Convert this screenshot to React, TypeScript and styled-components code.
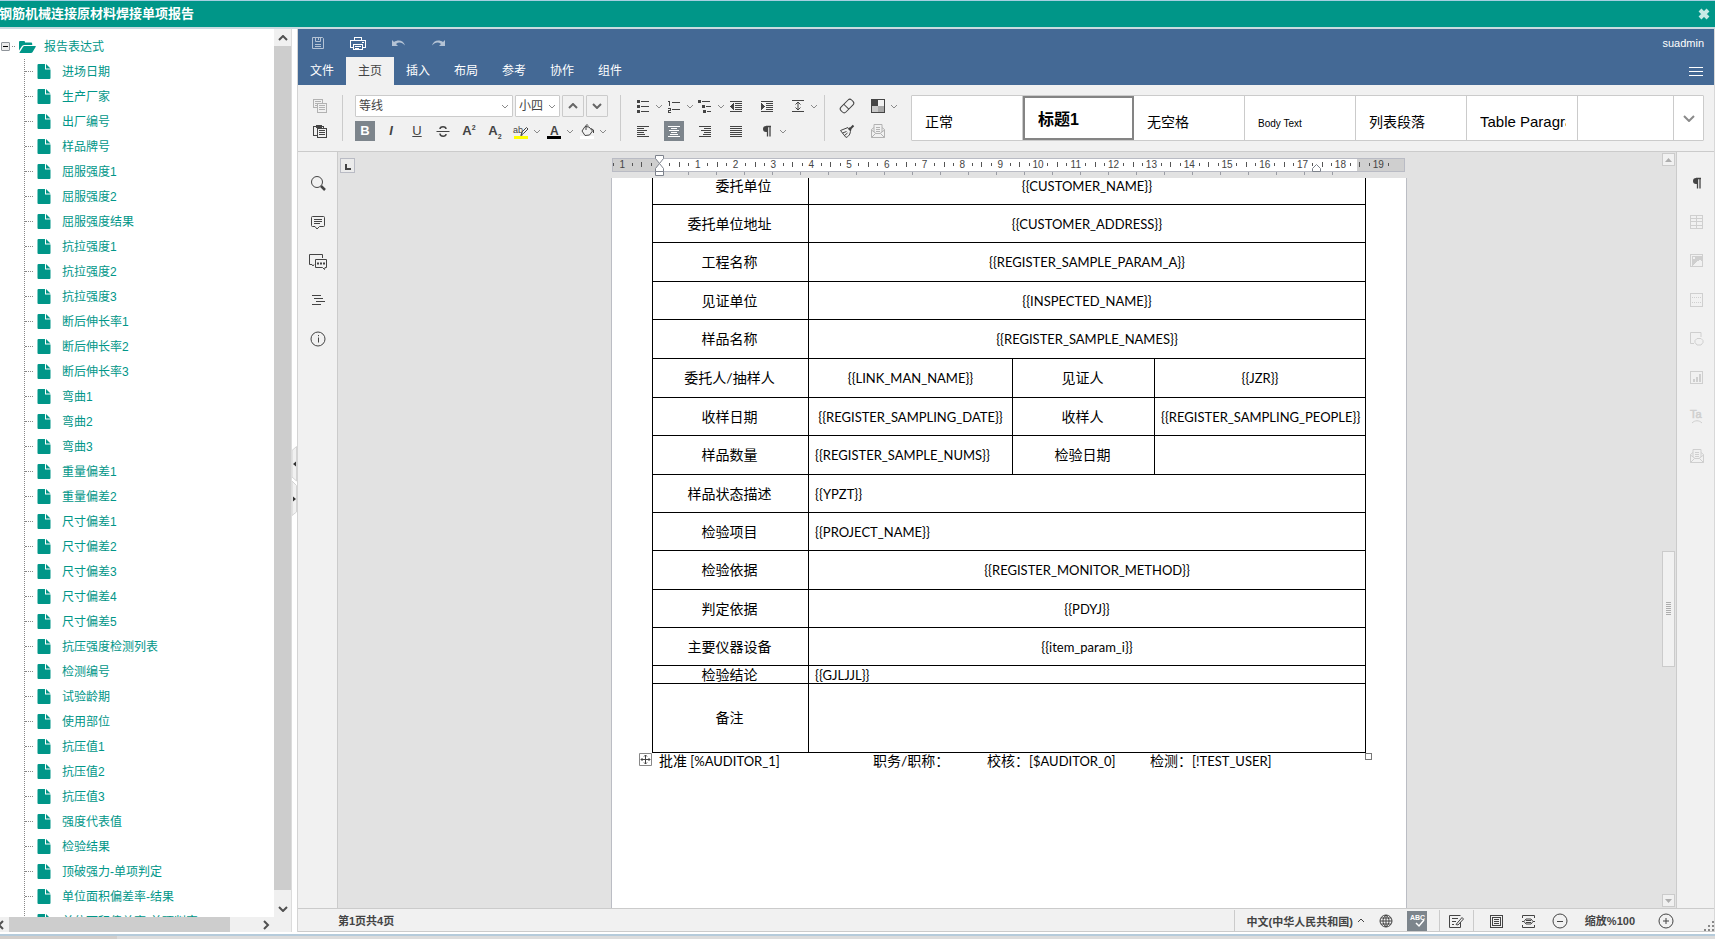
import React from "react";
import styled, { createGlobalStyle, css } from "styled-components";

const TEAL = "#009688";
const BLUE = "#446995";
const PANEL = "#f1f1f1";
const LINE = "#cbcbcb";
const INK = "#444444";
const MUTED = "#cfcfcf";

const Global = createGlobalStyle`
  *, *::before, *::after { box-sizing: border-box; }
  body {
    margin: 0;
    overflow: hidden;
    background: #fff;
    font-family: "Liberation Sans", "Noto Sans CJK SC", sans-serif;
    font-size: 12px;
    color: ${INK};
  }
  button, select { font-family: inherit; }
  button { padding: 0; border: 0; background: none; cursor: pointer; }
  svg { display: block; flex: none; }
`;

/* ---------- icons ---------- */

type IconProps = { children: React.ReactNode; size?: number; crisp?: boolean };

const Icon = ({ children, size = 20, crisp }: IconProps) => (
  <svg
    width={size}
    height={size}
    viewBox={`0 0 ${size} ${size}`}
    fill="none"
    stroke="currentColor"
    shapeRendering={crisp ? "crispEdges" : undefined}
    aria-hidden="true"
  >
    {children}
  </svg>
);

const icons: Record<string, React.ReactNode> = {
  save: (
    <Icon>
      <path d="M4.500 4.500h10l1 1v10h-11zM7.500 4.500v4h5v-4M10.500 5v2M7 11.500h6M7 13.500h6" />
    </Icon>
  ),
  print: (
    <Icon crisp>
      <path d="M6.500 7V4.500h7V7M5 14.500H2.500v-7h15v7H15M5.500 11.500h9v5h-9zM7 13.500h6M7 15.500h4M14 9.500h2" />
    </Icon>
  ),
  undo: (
    <Icon>
      <path d="M4 7v6h6l-2-2c3-2.500 6-1.500 9 1.500-1-5-7-6.500-11-3.500z" fill="currentColor" stroke="none" />
    </Icon>
  ),
  redo: (
    <Icon>
      <path d="M17 7v6h-6l2-2c-3-2.500-6-1.500-9 1.500 1-5 7-6.500 11-3.500z" fill="currentColor" stroke="none" />
    </Icon>
  ),
  copy: (
    <Icon crisp>
      <path d="M7 11.500H3.500v-8h9V7M5 5.500h6M5 7.500h2M5 9.500h2M7.500 7.500h9v9h-9zM9 9.500h6M9 11.500h6M9 13.500h6" />
    </Icon>
  ),
  paste: (
    <Icon crisp>
      <path d="M7 14.500H3.500v-9H6M12 5.500h1.500V7M7.500 7.500h9v9h-9zM9 9.500h6M9 11.500h6M9 13.500h6" />
      <path d="M6 4h6v3H6z" fill="currentColor" stroke="none" />
    </Icon>
  ),
  strike: (
    <Icon>
      <path d="M3.500 10.500h13" />
      <path d="M13 8c0-3-6-3-6 0M7 12.500c0 3.500 6.500 3.500 6 .5" strokeWidth="1.500" />
    </Icon>
  ),
  bullets: (
    <Icon crisp>
      <path d="M8 5.500h8M8 10.500h8M8 15.500h8" />
      <path d="M4 4h3v3H4zM4 9h3v3H4zM4 14h3v3H4z" fill="currentColor" stroke="none" />
    </Icon>
  ),
  numbers: (
    <Icon crisp>
      <path d="M8 6.500h8M8 13.500h8" />
      <path d="M4 5.500h1.500v4M4 12.500h2.500v2H4.500v2h2.500" />
    </Icon>
  ),
  multilevel: (
    <Icon crisp>
      <path d="M7 5.500h8M11 10.500h5M12 15.500h4" />
      <path d="M3 4h3v3H3zM7 9h3v3H7zM8 14h3v3H8z" fill="currentColor" stroke="none" />
    </Icon>
  ),
  outdent: (
    <Icon crisp>
      <path d="M4 5.500h12M9 7.500h7M9 9.500h7M9 11.500h7M9 13.500h7M4 15.500h12" />
      <path d="M8 7v7L4 10.500z" fill="currentColor" stroke="none" />
    </Icon>
  ),
  indent: (
    <Icon crisp>
      <path d="M4 5.500h12M9 7.500h7M9 9.500h7M9 11.500h7M9 13.500h7M4 15.500h12" />
      <path d="M4 7v7l4-3.500z" fill="currentColor" stroke="none" />
    </Icon>
  ),
  spacing: (
    <Icon>
      <path d="M4 4.500h12M4 15.500h12M10 6v8M7.500 8.500L10 6l2.500 2.500M7.500 11.500L10 14l2.500-2.500" />
    </Icon>
  ),
  left: (
    <Icon crisp>
      <path d="M4 5.500h12M4 7.500h7M4 9.500h10M4 11.500h7M4 13.500h8M4 15.500h12" />
    </Icon>
  ),
  center: (
    <Icon crisp>
      <path d="M4 5.500h12M7 7.500h6M5 9.500h10M7 11.500h6M6 13.500h8M4 15.500h12" />
    </Icon>
  ),
  right: (
    <Icon crisp>
      <path d="M4 5.500h12M9 7.500h7M6 9.500h10M9 11.500h7M8 13.500h8M4 15.500h12" />
    </Icon>
  ),
  justify: (
    <Icon crisp>
      <path d="M4 5.500h12M4 7.500h12M4 9.500h12M4 11.500h12M4 13.500h12M4 15.500h12" />
    </Icon>
  ),
  pilcrow: (
    <Icon>
      <path d="M14 5.500H9M10.500 5.500v10M13 5.500v10" strokeWidth="1.300" />
      <path d="M10.500 5H9a3 3 0 0 0 0 6h1.500z" fill="currentColor" stroke="none" />
    </Icon>
  ),
  eraser: (
    <Icon>
      <g transform="rotate(-45 10 10)">
        <rect x="2.500" y="6.500" width="15" height="7" rx="2.500" />
        <path d="M9 6.500v7" />
      </g>
    </Icon>
  ),
  brush: (
    <Icon>
      <path d="M13 8l3.500-3.500M11.500 7l2.500 2.500" strokeWidth="2" />
      <path d="M11 6.500l-7.500 3 5.500 7c2.500-1 4.500-3 4.500-7.500M5.500 12l4-1.500M7.500 14.500l3-2.500" />
    </Icon>
  ),
  shade: (
    <Icon crisp>
      <path d="M4 4h6v6H4z" fill="#444" stroke="none" />
      <path d="M10 10h6v6h-6z" fill="#a8a8a8" stroke="none" />
      <path d="M4 10h6v6H4z" fill="#c8c8c8" stroke="none" />
      <path d="M3.500 3.500h13v13h-13z" />
    </Icon>
  ),
  mail: (
    <Icon>
      <path d="M6 11V3.500h8V11M6 6.500l-2.500 2v8h13v-8l-2.500-2M3.500 9l4.500 3.500h4L16.500 9M3.500 16.500l4-4M16.500 16.500l-4-4M8 6.500h4M8 8.500h4M8 10.500h4" />
    </Icon>
  ),
  pen: (
    <Icon>
      <path d="M10 14l1.200-3.200L15.500 6.500l1.500 1.500-4.500 4.500zM9.500 14.500l2-.5" />
      <path d="M3 15h14v3H3z" fill="#ffff00" stroke="none" />
      <text x="2" y="12" fontSize="9" fill="currentColor" stroke="none">ab</text>
    </Icon>
  ),
  fontColor: (
    <Icon>
      <path d="M3 15h14v3H3z" fill="#000" stroke="none" />
      <text x="6" y="14" fontSize="12" fontWeight="700" fill="currentColor" stroke="none">A</text>
    </Icon>
  ),
  bucket: (
    <Icon>
      <path d="M3 15h14v3H3z" fill="#fff" stroke="none" />
      <path d="M8 5.500L5 10l3 4.500 4.500-.5 3-4-3.500-4-4-.5zM9 9V4.500c0-1 2-1 2 0M14 7.500l2.500 1.500v3" />
    </Icon>
  ),
  search: (
    <Icon>
      <circle cx="9" cy="9" r="5.500" />
      <path d="M13 13l4 4" strokeWidth="2.500" />
    </Icon>
  ),
  comment: (
    <Icon>
      <path d="M3.500 5.500a1 1 0 0 1 1-1h11a1 1 0 0 1 1 1v8a1 1 0 0 1-1 1h-4L9 17l-2-2.500H4.500a1 1 0 0 1-1-1zM6 7.500h8M6 9.500h8M6 11.500h6" />
    </Icon>
  ),
  chat: (
    <Icon>
      <path d="M6 13.500l-1 1.500-1-1.500H1.500v-10h13V7M7.500 8.500h11v8H17l-.500 2-2-2h-7z" />
      <path d="M9 11.500h2v2H9zM12 11.500h2v2h-2zM15 11.500h2v2h-2z" fill="currentColor" stroke="none" />
    </Icon>
  ),
  nav: (
    <Icon crisp>
      <path d="M4 5.500h9M6 8.500h9M8 11.500h9M4 14.500h9" />
    </Icon>
  ),
  info: (
    <Icon>
      <circle cx="10" cy="10" r="7" />
      <path d="M10.500 8.500v5M10.500 6v1.200" />
    </Icon>
  ),
  table: (
    <Icon crisp>
      <path d="M3.500 3.500h12v13h-12zM3 6.500h13M3 9.500h13M3 13.500h13M9.500 3v14" />
    </Icon>
  ),
  image: (
    <Icon crisp>
      <path d="M3.500 3.500h12v12h-12z" />
      <path d="M5 5h10v6l-2-3-2 2-6 5zM6 6v2h2V6z" fill="currentColor" fillRule="evenodd" stroke="none" />
    </Icon>
  ),
  header: (
    <Icon crisp>
      <path d="M3.500 3.500h12v13h-12z" />
      <path d="M5 7.500h10M5 12.500h10" strokeDasharray="1 1" />
    </Icon>
  ),
  shape: (
    <Icon>
      <path d="M7 14.500H3.500v-11h10.500V8M10 9.500h4l2 2v2l-2 2.500h-4l-2-2.500v-2z" />
    </Icon>
  ),
  chart: (
    <Icon crisp>
      <path d="M3.500 3.500h12v12h-12z" />
      <path d="M6 11h2v3H6zM9 9h2v5H9zM12 6h2v8h-2z" fill="currentColor" stroke="none" />
    </Icon>
  ),
  textArt: (
    <Icon>
      <text x="3" y="11" fontSize="11" fill="currentColor" stroke="currentColor" strokeWidth="0.500">Ta</text>
      <path d="M5 16c3-3 7-3 10 0" />
    </Icon>
  ),
  globe: (
    <Icon>
      <circle cx="10" cy="10" r="6" />
      <path d="M4 10h12M5 7h10M5 13h10M10 4v12M10 4c-4 3-4 9 0 12M10 4c4 3 4 9 0 12" />
    </Icon>
  ),
  spell: (
    <Icon>
      <text x="3" y="9" fontSize="7" fontWeight="700" fill="currentColor" stroke="none">ABC</text>
      <path d="M9 12l3 3 5-6" strokeWidth="1.500" />
    </Icon>
  ),
  edit: (
    <Icon>
      <path d="M14.500 11v5.500h-11v-12h11M6 7.500h6M6 10.500h4M6 13.500h2M10 13.500l6-7 1.500 1.500-5.500 6z" />
    </Icon>
  ),
  fitPage: (
    <Icon crisp>
      <path d="M4.500 4.500h12v12h-12zM6.500 6.500h8v8h-8zM8 8.500h5M8 10.500h5M8 12.500h5" />
    </Icon>
  ),
  fitWidth: (
    <Icon>
      <path d="M4.500 7V4.500h12V7M4.500 14v2.500h12V14M4 10.500h2M15 10.500h2M6 10.500l2-2.500h5l2 2.500-2 2.500H8zM8 9.500h5M8 11.500h5" />
    </Icon>
  ),
  minus: (
    <Icon>
      <circle cx="10" cy="10" r="7" />
      <path d="M7 10.500h6" />
    </Icon>
  ),
  plus: (
    <Icon>
      <circle cx="10" cy="10" r="7" />
      <path d="M7 10h6M10 7v6" />
    </Icon>
  ),
  menu: (
    <Icon crisp>
      <path d="M3 5.500h14M3 9.500h14M3 13.500h14" />
    </Icon>
  ),
};

const Chevron = ({ w = 6, up = false, stroke = 1 }: { w?: number; up?: boolean; stroke?: number }) => (
  <svg width={w + 2} height={w / 2 + 2} viewBox={`0 0 ${w + 2} ${w / 2 + 2}`} fill="none" stroke="currentColor" strokeWidth={stroke} aria-hidden="true">
    <path d={up ? `M1 ${w / 2 + 1}L${w / 2 + 1} 1l${w / 2} ${w / 2}` : `M1 1l${w / 2} ${w / 2} ${w / 2}-${w / 2}`} />
  </svg>
);

/* ---------- frame ---------- */

const Shell = styled.div`
  display: flex;
  flex-direction: column;
  height: 100vh;
`;

const TitleBar = styled.header`
  display: flex;
  align-items: center;
  justify-content: space-between;
  height: 29px;
  padding-right: 5px;
  background: ${TEAL};
  border-top: 1px solid #a6cfe0;
  border-bottom: 2px solid #c9dbe0;
`;

const Title = styled.h1`
  margin: 0 0 0 -1px;
  font-size: 13px;
  line-height: 20px;
  color: #fff;
`;

const CloseButton = styled.button`
  color: #c8e9e5;
`;

const Body = styled.div`
  display: flex;
  flex: 1;
  min-height: 0;
`;

const BottomStrip = styled.footer`
  height: 7px;
  background: linear-gradient(90deg, #d2cecb 117px, #dcdcdc 117px);
  border-top: 2px solid #fff;
  box-shadow: inset 0 2px 0 #b5cbdb;
`;

/* ---------- expression tree ---------- */

const Side = styled.aside`
  display: grid;
  grid-template-columns: 1fr 17px;
  grid-template-rows: 1fr 15px;
  width: 292px;
  border-right: 1px solid #dcdcdc;
`;

const Tree = styled.nav`
  overflow: hidden;
  min-height: 0;
  padding-top: 5px;
`;

const TreeRoot = styled.div`
  display: flex;
  align-items: center;
  height: 25px;
  color: ${TEAL};
`;

const Toggle = styled.button`
  display: grid;
  place-items: center;
  width: 9px;
  height: 9px;
  margin: 0 2px 0 1px;
  border: 1px solid #8f949a;
  border-radius: 1px;
  background: #ececec;
  &::before {
    content: "";
    width: 5px;
    height: 1px;
    background: #000;
  }
`;

const Dots = styled.span<{ $w: number }>`
  width: ${(p) => p.$w}px;
  border-top: 1px dotted #888;
`;

const TreeList = styled.ul`
  list-style: none;
  margin: 0 0 0 24px;
  padding: 0;
  border-left: 1px dotted #888;
`;

const TreeItem = styled.li`
  display: flex;
  align-items: center;
  height: 25px;
`;

const TreeLink = styled.a`
  display: flex;
  align-items: center;
  gap: 11px;
  margin-left: 4px;
  font-size: 12px;
  line-height: 16px;
  white-space: nowrap;
  color: ${TEAL};
  text-decoration: none;
`;

const RootLink = styled(TreeLink)`
  gap: 8px;
`;

const VBar = styled.div`
  display: flex;
  flex-direction: column;
  align-items: center;
  background: #f0f0f0;
  color: #505050;
`;

const VThumb = styled.div`
  width: 100%;
  flex: 1;
  margin-bottom: 10px;
  background: #cdcdcd;
`;

const BarButton = styled.button<{ $w: number; $h: number }>`
  display: grid;
  place-items: center;
  width: ${(p) => p.$w}px;
  height: ${(p) => p.$h}px;
  color: #505050;
`;

const HBar = styled.div`
  display: flex;
  align-items: center;
  background: #f0f0f0;
`;

const HThumb = styled.div`
  width: 221px;
  height: 15px;
  margin-right: auto;
  background: #cdcdcd;
`;

const Corner = styled.div`
  background: #f0f0f0;
`;

const Splitter = styled.div`
  display: flex;
  align-items: center;
  width: 6px;
  border-right: 1px solid #d4d4d4;
`;

const folder = (
  <svg width="17" height="14" viewBox="0 0 17 14" fill={TEAL} aria-hidden="true">
    <path d="M0 10.500V2.200C0 1.500.5 1 1.200 1h3.600c.7 0 1.200.5 1.200 1.200v.3h6c.7 0 1.200.5 1.200 1.200V5H5.500C4.500 5 3.700 5.300 3 6z" />
    <path d="M.5 12.500l3.300-5.200C4.200 6.500 5 6 6 6h10c.8 0 1 .5.6 1.100l-3 4.900c-.4.700-1.200 1-2 1H1c-.5 0-.8-.2-.5-.5z" />
  </svg>
);

const file = (
  <svg width="14" height="15" viewBox="0 0 14 15" fill={TEAL} aria-hidden="true">
    <path d="M1.500 0H8v5.500h5.500V14a1 1 0 0 1-1 1h-11a1 1 0 0 1-1-1V1a1 1 0 0 1 1-1z" />
    <path d="M9 0l4.500 4.500H9z" />
  </svg>
);

const expressions = [
  "进场日期", "生产厂家", "出厂编号", "样品牌号", "屈服强度1", "屈服强度2", "屈服强度结果",
  "抗拉强度1", "抗拉强度2", "抗拉强度3", "断后伸长率1", "断后伸长率2", "断后伸长率3",
  "弯曲1", "弯曲2", "弯曲3", "重量偏差1", "重量偏差2", "尺寸偏差1", "尺寸偏差2", "尺寸偏差3",
  "尺寸偏差4", "尺寸偏差5", "抗压强度检测列表", "检测编号", "试验龄期", "使用部位", "抗压值1",
  "抗压值2", "抗压值3", "强度代表值", "检验结果", "顶破强力-单项判定", "单位面积偏差率-结果",
  "单位面积偏差率-单项判定",
];

const Sidebar = () => (
  <Side>
    <Tree aria-label="报告表达式">
      <TreeRoot>
        <Toggle aria-label="折叠" />
        <Dots $w={3} />
        <RootLink href="#root">{folder}报告表达式</RootLink>
      </TreeRoot>
      <TreeList>
        {expressions.map((name) => (
          <TreeItem key={name}>
            <Dots $w={8} />
            <TreeLink href="#item">{file}{name}</TreeLink>
          </TreeItem>
        ))}
      </TreeList>
    </Tree>
    <VBar>
      <BarButton $w={17} $h={17} aria-label="向上"><Chevron w={8} up stroke={2} /></BarButton>
      <VThumb />
      <BarButton $w={17} $h={17} aria-label="向下"><Chevron w={8} stroke={2} /></BarButton>
    </VBar>
    <HBar>
      <BarButton $w={9} $h={15} aria-label="向左">
        <svg width="9" height="10" viewBox="0 0 9 10" fill="none" stroke="currentColor" strokeWidth="2"><path d="M3 1L-1 5l4 4" /></svg>
      </BarButton>
      <HThumb />
      <BarButton $w={17} $h={15} aria-label="向右">
        <svg width="8" height="10" viewBox="0 0 8 10" fill="none" stroke="currentColor" strokeWidth="2"><path d="M2 1l4 4-4 4" /></svg>
      </BarButton>
    </HBar>
    <Corner />
  </Side>
);

const SplitHandle = () => (
  <Splitter>
    <svg width="5" height="70" viewBox="0 0 5 70" aria-hidden="true">
      <path d="M0 4.500L4.500.5v34.500l-4.500-4z" fill="#f1f1f1" stroke="#d4d4d4" />
      <path d="M0 35l4.500 4.500V66L0 69.500z" fill="#f1f1f1" stroke="#d4d4d4" />
      <path d="M4 15.500v5l-3-2.500zM1 50.500v5l3-2.500z" fill="#333" />
    </svg>
  </Splitter>
);

/* ---------- editor header ---------- */

const Editor = styled.main`
  display: flex;
  flex: 1;
  flex-direction: column;
  min-width: 0;
  border-right: 1px solid #d8d8d8;
`;

const EditorHead = styled.div`
  display: flex;
  justify-content: space-between;
  height: 56px;
  padding-right: 10px;
  background: ${BLUE};
  color: #fff;
`;

const HeadLeft = styled.div`
  display: flex;
  flex-direction: column;
`;

const QuickRow = styled.div`
  display: flex;
  align-items: center;
  gap: 20px;
  height: 28px;
  padding-left: 10px;
`;

const IconButton = styled.button<{ $active?: boolean; $muted?: boolean; $faint?: boolean; $onBlue?: boolean }>`
  display: grid;
  place-items: center;
  width: 20px;
  height: 20px;
  font-size: 12px;
  color: ${(p) => (p.$onBlue ? (p.$muted ? "#b4c3d5" : "#fff") : p.$faint ? MUTED : p.$muted ? "#b2b2b2" : INK)};
  ${(p) => p.$active && css`
    background: #7d858c;
    color: #fff;
  `}
`;

const Tabs = styled.div`
  display: flex;
`;

const Tab = styled.button<{ $active?: boolean }>`
  width: 48px;
  height: 28px;
  padding-bottom: 3px;
  font-size: 12px;
  color: ${(p) => (p.$active ? INK : "#fff")};
  background: ${(p) => (p.$active ? PANEL : "transparent")};
`;

const UserBox = styled.div`
  display: flex;
  flex-direction: column;
  align-items: flex-end;
  gap: 5px;
  font-size: 11px;
  line-height: 28px;
`;

const MenuButton = styled(IconButton)`
  margin-right: -2px;
`;

const tabs = ["文件", "主页", "插入", "布局", "参考", "协作", "组件"];

/* ---------- toolbar ---------- */

const Toolbar = styled.div`
  display: flex;
  gap: 12px;
  height: 67px;
  padding: 10px 10px 9px 12px;
  background: ${PANEL};
  border-bottom: 1px solid ${LINE};
`;

const Divider = styled.span`
  width: 1px;
  height: 46px;
  background: ${LINE};
`;

const Group = styled.div`
  display: flex;
  flex-direction: column;
  gap: 4px;
`;

const Row = styled.div<{ $gap?: number; $tall?: boolean }>`
  display: flex;
  align-items: center;
  gap: ${(p) => p.$gap ?? 0}px;
  height: ${(p) => (p.$tall ? 22 : 20)}px;
`;

const ParagraphGroup = styled(Group)`
  margin-right: -7px;
`;

const Slot = styled.div`
  display: flex;
  align-items: center;
  width: 31px;
`;

const CaretButton = styled.button`
  display: grid;
  place-items: center;
  width: 11px;
  height: 20px;
  color: #8a8a8a;
`;

const Combo = styled.div<{ $w: number }>`
  display: grid;
  grid-template-columns: minmax(0, 1fr) 14px;
  align-items: center;
  width: ${(p) => p.$w}px;
  height: 22px;
  background: #fff;
  border: 1px solid ${LINE};
  border-radius: 1px;
  color: #8a8a8a;
`;

const ComboSelect = styled.select`
  grid-area: 1 / 1 / 2 / 3;
  width: 100%;
  min-width: 0;
  height: 20px;
  padding: 0 0 0 3px;
  border: 0;
  background: transparent;
  appearance: none;
  font-size: 12px;
  color: ${INK};
`;

const ComboCaret = styled.span`
  grid-area: 1 / 2;
  justify-self: center;
  pointer-events: none;
`;

const StepButton = styled.button`
  display: grid;
  place-items: center;
  width: 22px;
  height: 22px;
  border: 1px solid ${LINE};
  border-radius: 1px;
  color: #666;
`;

const Glyph = styled.span<{ $bold?: boolean; $italic?: boolean; $underline?: boolean }>`
  font-size: 13px;
  line-height: 16px;
  font-weight: ${(p) => (p.$bold ? 700 : 400)};
  font-style: ${(p) => (p.$italic ? "italic" : "normal")};
  text-decoration: ${(p) => (p.$underline ? "underline" : "none")};
  sup, sub { font-size: 7px; line-height: 0; }
`;

const Gallery = styled.div`
  display: flex;
  flex: 1;
  min-width: 0;
  height: 46px;
  background: #fff;
  border: 1px solid ${LINE};
  border-radius: 1px;
`;

const StyleCell = styled.button<{ $size: number; $active?: boolean }>`
  display: flex;
  align-items: flex-end;
  flex: none;
  width: 111px;
  height: 44px;
  padding: 0 11px ${(p) => (p.$size < 14 ? 6 : 8)}px 13px;
  border-right: 1px solid ${LINE};
  font-size: ${(p) => p.$size}px;
  line-height: 20px;
  text-align: left;
  white-space: nowrap;
  color: #000;
  ${(p) => p.$active && css`
    border: 2px solid #848484;
    font-weight: 700;
  `}
`;

const CellText = styled.span`
  flex: 1;
  min-width: 0;
  overflow: hidden;
`;

const GalleryMore = styled.button`
  display: grid;
  place-items: center;
  width: 30px;
  margin-left: auto;
  border-left: 1px solid ${LINE};
  color: #8a8a8a;
`;

const Tool = ({ icon, label, ...rest }: { icon: string; label: string; $active?: boolean; $muted?: boolean; $faint?: boolean; $onBlue?: boolean }) => (
  <IconButton aria-label={label} {...rest}>{icons[icon]}</IconButton>
);

const DropTool = ({ icon, label }: { icon: string; label: string }) => (
  <Slot>
    <Tool icon={icon} label={label} />
    <CaretButton aria-label={`${label}选项`}><Chevron /></CaretButton>
  </Slot>
);

const Ribbon = () => (
  <Toolbar>
    <Group>
      <Row $tall><Tool icon="copy" label="复制" $muted /></Row>
      <Row><Tool icon="paste" label="粘贴" /></Row>
    </Group>
    <Divider />
    <Group>
      <Row $tall $gap={2}>
        <Combo $w={158}>
          <ComboSelect aria-label="字体"><option>等线</option></ComboSelect>
          <ComboCaret><Chevron /></ComboCaret>
        </Combo>
        <Combo $w={45}>
          <ComboSelect aria-label="字号"><option>小四</option></ComboSelect>
          <ComboCaret><Chevron /></ComboCaret>
        </Combo>
        <StepButton aria-label="增大字号"><Chevron w={8} up stroke={2} /></StepButton>
        <StepButton aria-label="减小字号"><Chevron w={8} stroke={2} /></StepButton>
      </Row>
      <Row $gap={6}>
        <IconButton $active aria-label="加粗"><Glyph $bold>B</Glyph></IconButton>
        <IconButton aria-label="斜体"><Glyph $italic $bold>I</Glyph></IconButton>
        <IconButton aria-label="下划线"><Glyph $underline>U</Glyph></IconButton>
        <Tool icon="strike" label="删除线" />
        <IconButton aria-label="上标"><Glyph $bold>A<sup>2</sup></Glyph></IconButton>
        <IconButton aria-label="下标"><Glyph $bold>A<sub>2</sub></Glyph></IconButton>
        <Row $gap={2}>
          <DropTool icon="pen" label="突出显示" />
          <DropTool icon="fontColor" label="字体颜色" />
          <DropTool icon="bucket" label="底纹" />
        </Row>
      </Row>
    </Group>
    <Divider />
    <ParagraphGroup>
      <Row $tall>
        <DropTool icon="bullets" label="项目符号" />
        <DropTool icon="numbers" label="编号" />
        <DropTool icon="multilevel" label="多级列表" />
        <Slot><Tool icon="outdent" label="减少缩进" /></Slot>
        <Slot><Tool icon="indent" label="增加缩进" /></Slot>
        <DropTool icon="spacing" label="行距" />
      </Row>
      <Row>
        <Slot><Tool icon="left" label="左对齐" /></Slot>
        <Slot><Tool icon="center" label="居中" $active /></Slot>
        <Slot><Tool icon="right" label="右对齐" /></Slot>
        <Slot><Tool icon="justify" label="两端对齐" /></Slot>
        <DropTool icon="pilcrow" label="段落标记" />
      </Row>
    </ParagraphGroup>
    <Divider />
    <Group>
      <Row $tall>
        <Slot><Tool icon="eraser" label="清除样式" /></Slot>
        <DropTool icon="shade" label="配色方案" />
      </Row>
      <Row>
        <Slot><Tool icon="brush" label="格式刷" /></Slot>
        <Slot><Tool icon="mail" label="邮件合并" $muted /></Slot>
      </Row>
    </Group>
    <Gallery>
      <StyleCell $size={14}><CellText>正常</CellText></StyleCell>
      <StyleCell $size={16} $active><CellText>标题1</CellText></StyleCell>
      <StyleCell $size={14}><CellText>无空格</CellText></StyleCell>
      <StyleCell $size={10}><CellText>Body Text</CellText></StyleCell>
      <StyleCell $size={14}><CellText>列表段落</CellText></StyleCell>
      <StyleCell $size={15}><CellText>Table Paragraph</CellText></StyleCell>
      <GalleryMore aria-label="更多样式"><Chevron w={10} stroke={2} /></GalleryMore>
    </Gallery>
  </Toolbar>
);

/* ---------- work area ---------- */

const Work = styled.div`
  display: flex;
  flex: 1;
  min-height: 0;
`;

const Rail = styled.div<{ $right?: boolean }>`
  display: flex;
  flex-direction: column;
  align-items: center;
  gap: 19px;
  width: ${(p) => (p.$right ? 38 : 40)}px;
  padding-top: 21px;
  padding-left: ${(p) => (p.$right ? 3 : 1)}px;
  background: ${PANEL};
  border: 0 solid ${LINE};
  border-width: ${(p) => (p.$right ? "0 0 0 1px" : "0 1px 0 0")};
`;

const Canvas = styled.div`
  display: grid;
  flex: 1;
  grid-template-columns: 1fr 796px 1fr;
  grid-template-rows: 26px minmax(0, 1fr);
  min-width: 0;
  padding-left: 4px;
  background: #e2e2e2;
`;

const TabStop = styled.button`
  width: 15px;
  height: 15px;
  margin: 6px 0 0 -2px;
  border: 1px solid #b9bbc4;
  background: #ebebeb;
  &::before {
    content: "";
    display: block;
    width: 6px;
    height: 6px;
    margin: 2px 0 0 4px;
    border: solid ${INK};
    border-width: 0 0 2px 2px;
  }
`;

const Page = styled.article`
  grid-area: 2 / 2;
  overflow: hidden;
  padding: 0 40px;
  background: #fff;
  border: solid #bbbdc4;
  border-width: 0 1px;
`;

const Scroll = styled.div`
  display: flex;
  flex-direction: column;
  justify-content: space-between;
  grid-area: 1 / 3 / 3 / 4;
  justify-self: end;
  width: 14px;
  padding: 1px 1px 1px 0;
`;

const ScrollButton = styled.button`
  display: grid;
  place-items: center;
  width: 13px;
  height: 13px;
  border: 1px solid ${LINE};
  background: ${PANEL};
  color: #adadad;
`;

const ScrollThumb = styled(ScrollButton)`
  height: 116px;
  margin-top: 158px;
`;

const CM = 37.8;
const ZERO = 49;

const Ruler = () => {
  const marks: React.ReactNode[] = [];
  for (let q = -5; q <= 77; q++) {
    const x = ZERO + (q * CM) / 4;
    if (q === 0) continue;
    if (q % 4 === 0) {
      marks.push(
        <text key={q} x={x} y="16" fontSize="10" textAnchor="middle" fill="#444">{Math.abs(q / 4)}</text>
      );
    } else {
      const tall = q % 2 === 0;
      marks.push(
        <rect key={q} x={Math.round(x)} y={tall ? 10 : 11} width="1" height={tall ? 5 : 3} fill="#555" />
      );
    }
  }
  return (
    <svg width="796" height="26" viewBox="0 0 796 26" aria-label="标尺">
      <rect x="1.500" y="6.500" width="792" height="13" fill="#cfcfcf" stroke="#b9bbc4" />
      <rect x="48" y="7" width="698" height="12" fill="#fff" />
      {marks}
      {Array.from({ length: 24 }, (_, i) => (
        <rect key={i} x={77 + i * 28} y="20" width="1" height="3" fill="#9a9ca4" />
      ))}
      <path d="M44.500 3.500h8v3l-4 5-4-5zM44.500 19.500v-3l4-5 4 5v3zM44.500 19.500h8v4h-8z" fill="#fff" stroke="#7d828c" />
      <path d="M701.500 19.500v-3l4-4 4 4v3z" fill="#fff" stroke="#7d828c" />
    </svg>
  );
};

const ReportTable = styled.table`
  width: 714px;
  margin-top: -12px;
  border-collapse: collapse;
  table-layout: fixed;
  font-family: Lato, "Noto Sans CJK SC", sans-serif;
  font-size: 13px;
  color: #000;
`;

const ReportRow = styled.tr<{ $h?: number }>`
  height: 38px;
  &:nth-child(even) { height: 39px; }
  ${(p) => p.$h && css`
    &&& { height: ${p.$h}px; }
  `}
`;

const LabelCell = styled.th<{ $indent?: boolean }>`
  padding: 0 2px 0 0;
  border: 1px solid #000;
  font-size: 14px;
  line-height: 16px;
  font-weight: 400;
  text-indent: ${(p) => (p.$indent ? 28 : 0)}px;
`;

const ValueCell = styled.td<{ $left?: boolean }>`
  padding: 0 6px;
  border: 1px solid #000;
  line-height: 16px;
  text-align: ${(p) => (p.$left ? "left" : "center")};
  white-space: nowrap;
`;

const SignLine = styled.div`
  position: relative;
  display: grid;
  grid-template-columns: 214px 114px 163px auto;
  justify-content: start;
  padding-left: 7px;
  font-family: Lato, "Noto Sans CJK SC", sans-serif;
  font-size: 13px;
  line-height: 16px;
  color: #000;
  white-space: nowrap;
`;

const Cjk = styled.span`
  font-size: 14px;
`;

const MoveHandle = styled.svg`
  position: absolute;
  top: 0;
  left: -13px;
`;

const SizeHandle = styled.span`
  position: absolute;
  top: 0;
  left: 713px;
  width: 7px;
  height: 7px;
  border: 1px solid #777;
  background: #fff;
`;

type Line = { label: string; value: string; left?: boolean; label2?: string; value2?: string; h?: number; indent?: boolean };

const lines: Line[] = [
  { label: "委托单位", value: "{{CUSTOMER_NAME}}", indent: true },
  { label: "委托单位地址", value: "{{CUSTOMER_ADDRESS}}", h: 38 },
  { label: "工程名称", value: "{{REGISTER_SAMPLE_PARAM_A}}", h: 39 },
  { label: "见证单位", value: "{{INSPECTED_NAME}}", h: 38 },
  { label: "样品名称", value: "{{REGISTER_SAMPLE_NAMES}}", h: 39 },
  { label: "委托人/抽样人", value: "{{LINK_MAN_NAME}}", label2: "见证人", value2: "{{JZR}}" },
  { label: "收样日期", value: "{{REGISTER_SAMPLING_DATE}}", label2: "收样人", value2: "{{REGISTER_SAMPLING_PEOPLE}}" },
  { label: "样品数量", value: "{{REGISTER_SAMPLE_NUMS}}", left: true, label2: "检验日期", value2: "" },
  { label: "样品状态描述", value: "{{YPZT}}", left: true },
  { label: "检验项目", value: "{{PROJECT_NAME}}", left: true, h: 38 },
  { label: "检验依据", value: "{{REGISTER_MONITOR_METHOD}}", h: 39 },
  { label: "判定依据", value: "{{PDYJ}}", h: 38 },
  { label: "主要仪器设备", value: "{{item_param_i}}" },
  { label: "检验结论", value: "{{GJLJJL}}", left: true, h: 18 },
  { label: "备注", value: "", h: 69 },
];

const Document = () => (
  <Page>
    <ReportTable>
      <colgroup>
        <col style={{ width: 156 }} />
        <col style={{ width: 204 }} />
        <col style={{ width: 142 }} />
        <col />
      </colgroup>
      <tbody>
        {lines.map((l) => (
          <ReportRow key={l.label} $h={l.h}>
            <LabelCell scope="row" $indent={l.indent}>{l.label}</LabelCell>
            <ValueCell $left={l.left} colSpan={l.label2 ? 1 : 3}>{l.value}</ValueCell>
            {l.label2 && <LabelCell scope="row">{l.label2}</LabelCell>}
            {l.label2 && <ValueCell>{l.value2}</ValueCell>}
          </ReportRow>
        ))}
      </tbody>
    </ReportTable>
    <SignLine>
      <span><Cjk>批准</Cjk> [%AUDITOR_1]</span>
      <Cjk>职务/职称：</Cjk>
      <span><Cjk>校核：</Cjk>[$AUDITOR_0]</span>
      <span><Cjk>检测：</Cjk>[!TEST_USER]</span>
      <MoveHandle width="13" height="13" viewBox="0 0 13 13" fill="#fff" stroke="#888">
        <path d="M.5.500h12v12H.5z" />
        <path d="M6.500 2v9M2 6.500h9M5 3.500l1.500-1.500L8 3.500M5 9.500L6.500 11 8 9.500M3.500 5L2 6.500 3.500 8M9.500 5L11 6.500 9.500 8" stroke="#444" fill="none" />
      </MoveHandle>
      <SizeHandle />
    </SignLine>
  </Page>
);

/* ---------- status bar ---------- */

const Status = styled.div`
  display: flex;
  align-items: center;
  justify-content: space-between;
  height: 24px;
  padding: 1px 0 0 40px;
  background: ${PANEL};
  border: solid ${LINE};
  border-width: 1px 0;
  font-size: 11px;
  line-height: 16px;
  font-weight: 700;
`;

const StatusRight = styled.div`
  display: flex;
  align-items: center;
  height: 21px;
`;

const StatusGroup = styled.div<{ $gap: number; $pad: string }>`
  display: flex;
  align-items: center;
  gap: ${(p) => p.$gap}px;
  height: 100%;
  padding: ${(p) => p.$pad};
  border-left: 1px solid ${LINE};
`;

const LangButton = styled.button`
  display: flex;
  align-items: center;
  gap: 4px;
  font-size: 11px;
  font-weight: 700;
  color: ${INK};
`;

const ZoomLabel = styled.span`
  padding: 0 9px 0 3px;
`;

const Grip = styled.svg`
  align-self: flex-end;
`;

const StatusBar = () => (
  <Status>
    <span>第1页共4页</span>
    <StatusRight>
      <StatusGroup $gap={11} $pad="0 12px">
        <LangButton>中文(中华人民共和国)<Chevron up /></LangButton>
        <Tool icon="globe" label="文档语言" />
        <Tool icon="spell" label="拼写检查" $active />
      </StatusGroup>
      <StatusGroup $gap={0} $pad="0 7px 0 6px">
        <Tool icon="edit" label="修订" />
      </StatusGroup>
      <StatusGroup $gap={12} $pad="0 28px 0 12px">
        <Tool icon="fitPage" label="适合页面" />
        <Tool icon="fitWidth" label="适合宽度" />
        <Tool icon="minus" label="缩小" />
        <ZoomLabel>缩放%100</ZoomLabel>
        <Tool icon="plus" label="放大" />
      </StatusGroup>
      <Grip width="10" height="10" viewBox="0 0 10 10" fill="#888" aria-hidden="true">
        <path d="M8 0h2v2H8zM4 4h2v2H4zM8 4h2v2H8zM0 8h2v2H0zM4 8h2v2H4zM8 8h2v2H8z" />
      </Grip>
    </StatusRight>
  </Status>
);

export default function App() {
  return (
    <Shell>
      <Global />
      <TitleBar>
        <Title>钢筋机械连接原材料焊接单项报告</Title>
        <CloseButton aria-label="关闭">
          <svg width="12" height="12" viewBox="0 0 12 12" stroke="currentColor" strokeWidth="4" aria-hidden="true">
            <path d="M2 2l8 8M10 2l-8 8" />
          </svg>
        </CloseButton>
      </TitleBar>
      <Body>
        <Sidebar />
        <SplitHandle />
        <Editor>
          <EditorHead>
            <HeadLeft>
              <QuickRow>
                <Tool icon="save" label="保存" $onBlue $muted />
                <Tool icon="print" label="打印" $onBlue />
                <Tool icon="undo" label="撤销" $onBlue $muted />
                <Tool icon="redo" label="重做" $onBlue $muted />
              </QuickRow>
              <Tabs role="tablist">
                {tabs.map((t) => (
                  <Tab key={t} role="tab" aria-selected={t === "主页"} $active={t === "主页"}>{t}</Tab>
                ))}
              </Tabs>
            </HeadLeft>
            <UserBox>
              <span>suadmin</span>
              <MenuButton $onBlue aria-label="菜单">{icons.menu}</MenuButton>
            </UserBox>
          </EditorHead>
          <Ribbon />
          <Work>
            <Rail>
              <Tool icon="search" label="搜索" />
              <Tool icon="comment" label="批注" />
              <Tool icon="chat" label="聊天" />
              <Tool icon="nav" label="导航" />
              <Tool icon="info" label="关于" />
            </Rail>
            <Canvas>
              <TabStop aria-label="制表位" />
              <Ruler />
              <Document />
              <Scroll>
                <ScrollButton aria-label="上移">
                  <svg width="7" height="4" viewBox="0 0 7 4" fill="currentColor"><path d="M0 4h7L3.500 0z" /></svg>
                </ScrollButton>
                <ScrollThumb aria-label="滚动条">
                  <svg width="5" height="14" viewBox="0 0 5 14" stroke="currentColor" shapeRendering="crispEdges">
                    <path d="M0 .5h5M0 2.500h5M0 4.500h5M0 6.500h5M0 8.500h5M0 10.500h5M0 12.500h5" />
                  </svg>
                </ScrollThumb>
                <ScrollButton aria-label="下移">
                  <svg width="7" height="4" viewBox="0 0 7 4" fill="currentColor"><path d="M0 0h7L3.500 4z" /></svg>
                </ScrollButton>
              </Scroll>
            </Canvas>
            <Rail $right>
              <Tool icon="pilcrow" label="段落设置" />
              <Tool icon="table" label="表格设置" $faint />
              <Tool icon="image" label="图片设置" $faint />
              <Tool icon="header" label="页眉页脚设置" $faint />
              <Tool icon="shape" label="形状设置" $faint />
              <Tool icon="chart" label="图表设置" $faint />
              <Tool icon="textArt" label="艺术字设置" $faint />
              <Tool icon="mail" label="邮件合并设置" $faint />
            </Rail>
          </Work>
          <StatusBar />
        </Editor>
      </Body>
      <BottomStrip />
    </Shell>
  );
}
